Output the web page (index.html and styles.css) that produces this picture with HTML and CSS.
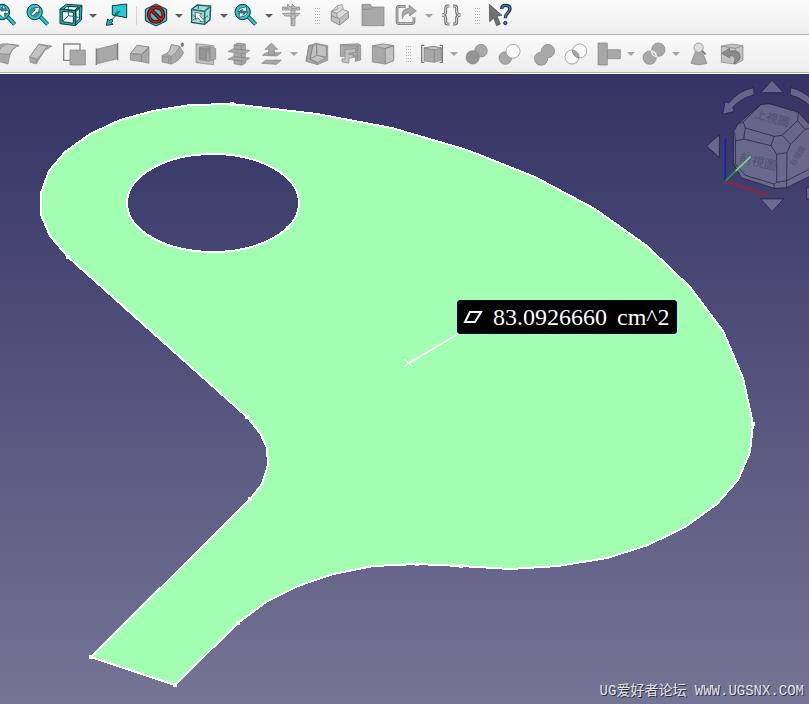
FILE: index.html
```
<!DOCTYPE html>
<html lang="zh-Hans">
<head>
<meta charset="utf-8">
<meta name="viewport" content="width=device-width, initial-scale=1">
<title>Part</title>
<link rel="stylesheet" href="styles.css">
</head>
<body>
<div class="app">
  <div class="toolbar toolbar-view" role="toolbar" aria-label="View">
    <button class="tool teal" aria-label="Fit all"><svg viewBox="-24 9 75 75"><path d="M22 50 44 73" class="rim"/><path d="M22 50 44 73" class="handle"/><circle cx="6" cy="36" r="23"/><circle cx="6" cy="36" r="17" class="lens"/><path d="M-8 36 3 28v5h7v-8H5l5-8 8 8h-4v8h5v-4l8 7-8 7v-4h-5v8h4l-8 7z" class="paper"/></svg></button>
    <button class="tool teal" aria-label="Fit selection"><svg viewBox="75 9 75 75"><path d="M120 50 143 73" class="rim"/><path d="M120 50 143 73" class="handle"/><circle cx="104" cy="36" r="23"/><circle cx="104" cy="36" r="18" class="lens"/><path d="M93 43 106 29 101 25 119 21 115 39 111 35 98 48z" class="paper"/></svg></button>
    <button class="tool teal" aria-label="Isometric"><svg viewBox="174 9 75 75"><path fill-rule="evenodd" d="M180 27 199 13 246 16 244 60 226 77 180 71zM187 34V65L220 70V37zM228 35V67L238 57V25zM191 28 223 31 235 21 201 19z"/><path d="M205 20v27M205 47l-18 18M205 47l31 5" class="thin"/><path d="M180 27 226 32 246 16M226 32v45" class="line"/></svg></button>
    <button class="drop" aria-label="More views"></button>
    <button class="tool teal" aria-label="Go to link"><svg viewBox="309 9 75 75"><path d="M337 17 380 12V53L337 45z" class="bright"/><path d="M360 34 333 62M360 34l-10 3-6 9" class="line"/><path d="M319 76 323 57 328 62 334 57 339 63 334 68 339 73z"/></svg></button>
    <span class="rule"></span>
    <button class="tool teal" aria-label="Draw style"><svg viewBox="432 9 75 75"><path d="M436 28 468 12 500 28V62L468 78 436 62z" class="bright"/><circle cx="468" cy="44" r="22" fill="none" stroke="#400" stroke-width="11"/><path d="M453 29 483 59" stroke="#400" stroke-width="11"/><circle cx="468" cy="44" r="22" fill="none" stroke="#c91818" stroke-width="6"/><path d="M453 29 483 59" stroke="#c91818" stroke-width="6"/></svg></button>
    <button class="drop" aria-label="More draw styles"></button>
    <button class="tool teal" aria-label="Selection view"><svg viewBox="-3 9 75 75"><path d="M5 28 22 15 62 18 60 59 44 73 5 67z" class="pale"/><path d="M7 29 44 34 60 20M44 34v37" class="band"/><path d="M25 18v9M9 47l8 2M30 65l24-18M9 60l12-9" class="thin"/><path d="M15 37 35 41 29 47 42 61 36 67 23 53 17 59z" class="paper"/></svg></button>
    <button class="drop" aria-label="More selection views"></button>
    <button class="tool teal" aria-label="Sync view"><svg viewBox="132 9 75 75"><path d="M174 50 197 73" class="rim"/><path d="M174 50 197 73" class="handle"/><circle cx="158" cy="36" r="23"/><circle cx="158" cy="36" r="17" class="lens"/><path d="M144 34q5-13 20-11l5-5v16h-15l5-5q-7-1-9 5zM173 37q-5 13-19 12l-6 5V39h15l-5 5q8 0 9-7z" class="paper"/></svg></button>
    <button class="drop" aria-label="More sync options"></button>
    <button class="tool" aria-label="Measure"><svg viewBox="267 9 75 75"><path d="M303 20H315V77H303z" class="light"/><path d="M277 21H293V12L299 19V21H306V12L315 21H329V30H277zM277 40H329L322 48H315V56H303V48H285z" class="light"/><path d="M304 61h6M304 66h6M304 71h6M283 25h14M303 25h18M303 44h14" class="thin"/></svg></button>
    <span class="grip"></span>
    <button class="tool" aria-label="New part"><svg viewBox="414 9 75 75"><path d="M424 34 443 16 456 14 460 29 475 34V54L449 75 424 62z" class="pale-grey"/><path d="M424 34 441 40V52L449 56 475 36V54L449 75 424 62z" class="light"/><path d="M424 47 449 58V75M441 40 460 26M443 16V27L424 34" class="line"/></svg></button>
    <button class="tool" aria-label="New group"><svg viewBox="513 9 75 75"><path d="M516 77V13H541L546 21H582V77z"/><path d="M516 28H541L546 22" class="line"/></svg></button>
    <button class="tool" aria-label="Export link"><svg viewBox="42 9 75 75"><path d="M77 19H58Q51 19 51 27V64Q51 71 58 71H94Q102 71 102 64V52" fill="none" stroke="#777" stroke-width="8"/><path d="M77 19H58Q51 19 51 27V64Q51 71 58 71H94Q102 71 102 64V52" fill="none" stroke="#c4c4c4" stroke-width="3"/><path d="M67 56Q61 26 87 25V15L109 33 89 48V39Q73 38 67 56z"/></svg></button>
    <button class="drop off" aria-label="More link options"></button>
    <button class="tool" aria-label="Variable set"><svg viewBox="177 9 75 75"><g fill="none" stroke="#747474" stroke-width="9"><path d="M208 18H203Q197 18 197 25V36Q197 44 186 45Q197 46 197 54V65Q197 72 203 72H208M219 18H224Q230 18 230 25V36Q230 44 242 45Q230 46 230 54V65Q230 72 224 72H219"/></g><g fill="none" stroke="#dddddd" stroke-width="3"><path d="M208 18H203Q197 18 197 25V36Q197 44 186 45Q197 46 197 54V65Q197 72 203 72H208M219 18H224Q230 18 230 25V36Q230 44 242 45Q230 46 230 54V65Q230 72 224 72H219"/></g></svg></button>
    <span class="grip"></span>
    <button class="tool" aria-label="What's this?"><svg viewBox="324 9 75 75"><path d="M328 13 366 46 351 48 361 72 350 77 341 54 329 65z" fill="#6f716e" stroke="#444"/><path d="M365 27Q365 16 377 16 390 16 390 27C390 37 376 38 376 55" fill="none" stroke="#1d2f4c" stroke-width="10"/><path d="M366 27Q366 16 377 16 390 16 390 27C390 37 376 38 376 54" fill="none" stroke="#4779b3" stroke-width="4"/><circle cx="376" cy="69" r="5" fill="#4779b3" stroke="#1d2f4c" stroke-width="3"/></svg></button>
  </div>

  <div class="toolbar toolbar-part" role="toolbar" aria-label="Part">
    <button class="tool" aria-label="Fillet"><svg viewBox="-15 123 75 75"><path d="M-12 148Q0 130 12 131L57 136Q40 142 30 163L24 192-12 182z"/><path d="M-12 157Q0 163 29 163 37 142 57 137L20 132Q-2 142-6 159z" class="light"/></svg></button>
    <button class="tool" aria-label="Chamfer"><svg viewBox="84 123 75 75"><path d="M89 171 117 132 156 138 135 151 108 192 90 186z"/><path d="M89 171 116 133 142 139 112 178z" class="light"/><path d="M112 178 108 190" class="line"/></svg></button>
    <button class="tool" aria-label="Make face from wires"><svg viewBox="183 123 75 75"><path d="M191 132H240V181H191z" class="frame"/><path d="M210 150H256V195H210z"/></svg></button>
    <button class="tool" aria-label="Ruled surface"><svg viewBox="282 123 75 75"><path d="M292 147 350 133V177L292 191z"/><path d="M289 145V195M353 129V181" class="post"/></svg></button>
    <button class="tool" aria-label="Loft"><svg viewBox="381 123 75 75"><path d="M391 161 411 136 447 141V190L425 185 391 180z"/><path d="M391 161 411 136 447 141 425 163z" class="light"/><path d="M391 161 425 163V185M425 163 447 145" class="line"/></svg></button>
    <button class="tool" aria-label="Sweep"><svg viewBox="480 123 75 75"><path d="M486 166 500 161Q512 153 514 134L539 139 551 158Q539 184 513 192L486 186z"/><path d="M500 161Q512 153 514 134L539 139Q531 159 513 170z" class="light"/><path d="M487 171H506V188M513 170V192" class="line"/><ellipse cx="547" cy="134" rx="4" ry="6" fill="#777"/></svg></button>
    <button class="tool" aria-label="Section"><svg viewBox="9 123 75 75"><path d="M18 131 71 137V194L18 188z" class="light"/><path d="M28 142 58 139 77 145V177L58 184 28 179z"/><path d="M29 144 49 147V178L29 176zM49 147 60 143V180" class="dark"/></svg></button>
    <button class="tool" aria-label="Cross-sections"><svg viewBox="108 123 75 75"><path d="M132 135 144 129 166 132V190L154 196 132 191z"/><path d="M154 138V195M132 135 154 138 166 132" class="line"/><path d="M114 155 128 147 180 151 165 161zM114 178 128 170 180 174 165 184z"/></svg></button>
    <button class="tool" aria-label="Offset"><svg viewBox="207 123 75 75"><path d="M217 166 228 158H274L260 168zM215 190 228 181 274 180 259 193z"/><path d="M244 129 263 148H253V165H236V148H225z"/></svg></button>
    <button class="drop off" aria-label="More offsets"></button>
    <button class="tool" aria-label="Thickness"><svg viewBox="342 123 75 75"><path d="M357 136 370 133 376 129 413 137V181L382 194 348 184z"/><path d="M368 139 380 133V166L360 177zM380 133 409 139V172L380 166z" class="light"/><path d="M360 177 380 166 409 173 383 187z" class="light"/><path d="M357 136 348 184M357 136 368 139 360 179 382 189V194" class="line"/></svg></button>
    <button class="tool" aria-label="Projection on surface"><svg viewBox="441 123 75 75"><path d="M451 134 505 131 512 136V180L496 184V171L451 169z"/><path d="M465 149 497 146V157L477 159V164L490 163V173L477 174V189L456 186V176L465 177z" class="light"/><path d="M451 134 502 138 512 135M502 138V182" class="line"/></svg></button>
    <button class="tool" aria-label="Color per face"><svg viewBox="540 123 75 75"><path d="M547 138 578 132 611 137V182L586 192 547 186z"/><path d="M547 138 578 132 611 137 586 145zM586 145 611 137V182L586 192z" class="light"/></svg></button>
    <span class="grip"></span>
    <button class="tool" aria-label="Compound"><svg viewBox="117 123 75 75"><path d="M132 144 160 139 184 144V180L163 187 132 183z"/><path d="M132 144 160 139 184 144 163 150z" class="light"/><path d="M163 150V186" class="line"/><path d="M133 136H125V187H133M179 136H187V187H179" fill="none" stroke="#777" stroke-width="4"/></svg></button>
    <button class="drop off" aria-label="More compound tools"></button>
    <button class="tool" aria-label="Boolean"><svg viewBox="252 123 75 75"><circle cx="303" cy="152" r="19"/><circle cx="278" cy="172" r="20" class="dark"/></svg></button>
    <button class="tool" aria-label="Cut"><svg viewBox="351 123 75 75"><circle cx="376" cy="174" r="19"/><circle cx="399" cy="154" r="21" fill="#fbfbfb"/></svg></button>
    <button class="tool" aria-label="Union"><svg viewBox="447 123 75 75"><path d="M481 156A20 20 0 1 1 500 173A20 20 0 1 1 481 156z"/></svg></button>
    <button class="tool" aria-label="Intersection"><svg viewBox="549 123 75 75"><circle cx="576" cy="171" r="21" class="blank"/><circle cx="599" cy="153" r="21" class="blank"/><path d="M578 151A21 21 0 0 1 597 173A21 21 0 0 1 578 151z"/></svg></button>
    <button class="tool" aria-label="Connect"><svg viewBox="78 123 75 75"><path d="M84 129H112V149H151V176H112V195H84z"/><path d="M112 149V176" class="line"/></svg></button>
    <button class="drop off" aria-label="More join tools"></button>
    <button class="tool" aria-label="Boolean fragments"><svg viewBox="213 123 75 75"><circle cx="265" cy="149" r="20"/><circle cx="239" cy="173" r="20"/><path d="M244 153A20 20 0 0 1 260 170A20 20 0 0 1 244 153z" stroke="#eeeeee" stroke-width="4"/></svg></button>
    <button class="drop off" aria-label="More split tools"></button>
    <button class="tool" aria-label="Check geometry"><svg viewBox="348 123 75 75"><path d="M379 147H393L411 190Q387 199 363 190z"/><circle cx="386" cy="143" r="14" class="lens-grey"/><path d="M396 152 407 163" stroke="#777" stroke-width="5"/></svg></button>
    <button class="tool" aria-label="Defeaturing"><svg viewBox="447 123 75 75"><path d="M454 138 486 132 519 137V181L496 192 454 187z" class="light"/><path d="M454 138 496 145 519 137M496 145V192" class="line"/><path d="M455 160 479 145V154Q508 146 511 169 510 185 491 191 503 167 479 166V174z" fill="#8a8a8a" stroke="#666"/></svg></button>
  </div>

  <main class="viewport">
    <svg class="model" aria-label="Measured face">
      <g transform="translate(0 -74)">
        <path class="face" fill-rule="evenodd" d="M232 104 190 105 153 111 120 120 90 134 65 152 49 171 41 193V215L50 236 68 257 247 417 260 433 267 448 268 465 262 484 250 499 91 657 175 685 238 623 266 602 298 586 333 574 373 566 417 564 461 566 510 569 558 566 607 558 648 545 685 527 717 504 738 480 750 452 753 424 743 378 723 331 690 287 647 246 595 209 535 177 467 150 392 128 317 114zM127 203A86 49 0 1 0 299 203A86 49 0 1 0 127 203z"/>
        <path class="vertices" d="M230 104h4M66 257h4M245 417h4M248 499h4M89 657h4M173 685h4M236 623h4M415 564h4M459 566h4M751 424h4M286 228h4"/>
        <path class="leader" d="M409 363 458 334"/>
        <path class="anchor" d="M404 359 413 367M413 359 404 367"/>
      </g>
    </svg>

    <output class="measure">
      <svg class="area-icon" viewBox="0 0 20 14" aria-hidden="true"><path d="M7 2H18L12 12H2z"/></svg>
      <span>83.0926660</span>
      <span>cm^2</span>
    </output>

    <svg class="navcube" viewBox="0 6 342 429" aria-label="Navigation cube">
      <g class="nav-part">
        <path d="M231 25 266 62H197z"/>
        <path d="M231 419 266 381H197z"/>
        <path d="M35 223 73 188V256z"/>
        <path d="M176 47Q133 54 101 93L90 88 83 127 119 118 113 106Q140 76 177 69z"/>
        <path d="M287 47Q322 54 350 82V107Q322 77 285 69z"/>
        <path d="M335 347H350V381H335z"/>
        <path d="M197 98 223 95 310 121 350 165V310L275 347 237 349 139 317 115 273V180L129 155z"/>
        <path d="M197 98 145 150 151 168 238 193 261 190 308 146 310 121M129 155 145 150M151 168 146 201 121 207 119 181M146 201 228 221 238 193M228 221 245 247 276 242 287 217 261 190M287 217 330 172 308 146M245 247V331L275 326 276 242M121 207V276L151 310 237 336 245 331M237 336V349M275 326V347M275 326 350 288M330 172 350 168"/>
      </g>
      <g class="nav-text">
        <text x="178" y="136" font-size="35" transform="rotate(16 178 136)">上視圖</text>
        <text x="130" y="270" font-size="38" transform="rotate(13 130 270)">前視圖</text>
        <text x="297" y="284" font-size="22" transform="rotate(-58 297 284)">右視圖</text>
      </g>
      <path d="M91 325V200" stroke="#1c1cb4" stroke-width="5"/>
      <path d="M91 327 167 254" stroke="#20a040" stroke-width="5"/>
      <path d="M122 297 167 254" stroke="#82d496" stroke-width="5"/>
      <path d="M91 328 220 371" stroke="#a81c30" stroke-width="5"/>
    </svg>

    <p class="credit">UG爱好者论坛 WWW.UGSNX.COM</p>
  </main>
</div>
</body>
</html>
```
FILE: styles.css
```
* {
  box-sizing: border-box;
}

body {
  margin: 0;
  font-family: "Liberation Serif", "Noto Sans CJK SC", serif;
}

.app {
  display: flex;
  flex-direction: column;
  height: 100vh;
  overflow: hidden;
}

/* Toolbars */
.toolbar {
  display: flex;
  flex: none;
  overflow: hidden;
  border-bottom: 1px solid #b2b2b2;
  background: linear-gradient(#fafafa, #eeeeee);
}

.toolbar-view {
  padding: 3px 0 6px;
}

.toolbar-view > :first-child {
  margin-left: -12px;
}

.toolbar-part {
  padding: 6px 0;
}

.toolbar-part > :first-child {
  margin-left: -9px;
}

.tool,
.drop {
  flex: none;
  display: flex;
  align-items: center;
  justify-content: center;
  padding: 0;
  border: 0;
  background: none;
}

.tool {
  width: 33px;
  height: 25px;
}

.tool svg {
  width: 25px;
  height: 25px;
  fill: #a8a8a8;
  stroke: #808080;
  stroke-width: 2;
}

.drop {
  width: 12px;
  height: 25px;
}

.drop::before {
  content: "";
  border: 4px solid transparent;
  border-top: 4px solid #606060;
  border-bottom: 0;
}

.drop.off::before {
  border-top-color: #a4a4a4;
}

.rule {
  flex: none;
  width: 1px;
  margin: 3px 3px 3px 4px;
  background: #d2d2d2;
}

.grip {
  flex: none;
  width: 5px;
  margin: 5px 4px 3px 7px;
  background: conic-gradient(from 270deg at 1px 1px, #b4b4b4 90deg, transparent 0) 0 0 / 2px 3px;
}

.tool .line,
.tool .thin {
  fill: none;
}

.tool .light {
  fill: #c2c2c2;
}

.tool .pale-grey {
  fill: #dadada;
}

.tool .dark {
  fill: #959595;
}

.tool .blank {
  fill: #ffffff;
  fill-opacity: 0.5;
}

.tool .lens-grey {
  fill: #dedede;
}

.tool .frame {
  fill: #f6f6f6;
  stroke: #868686;
  stroke-width: 4;
}

.tool .post {
  stroke-width: 4;
}

.teal svg {
  fill: #20b4ba;
  stroke: #0b3c42;
  stroke-width: 3;
}

.teal .rim {
  stroke-width: 12;
}

.teal .handle {
  stroke: #24c9ce;
  stroke-width: 7;
}

.teal .lens {
  fill: #35969b;
  stroke: #28d7db;
  stroke-width: 4;
}

.teal .paper {
  fill: #ffffff;
  stroke-width: 2;
}

.teal .bright {
  fill: #24cbd1;
}

.teal .pale {
  fill: #a9dad7;
  stroke: #15575a;
  stroke-width: 4;
}

.teal .band {
  fill: none;
  stroke: #267b7c;
  stroke-width: 5;
}

.teal .thin {
  stroke: #127780;
}

/* 3D view */
.viewport {
  position: relative;
  flex: 1;
  min-height: 0;
  overflow: hidden;
  border-top: 1px solid #ffffff;
  background: linear-gradient(#333365, #757494);
}

.model {
  position: absolute;
  inset: 0;
  width: 100%;
  height: 100%;
  shape-rendering: crispEdges;
}

.face {
  fill: #a2ffb2;
  stroke: #ffffff;
  stroke-width: 2;
}

.vertices {
  stroke: #ffffff;
  stroke-width: 4;
}

.leader {
  stroke: #ffffff;
  stroke-width: 2;
  shape-rendering: auto;
}

.anchor {
  stroke: #ffffff;
  stroke-width: 1;
  shape-rendering: auto;
}

.measure {
  position: absolute;
  left: 457px;
  top: 226px;
  display: flex;
  align-items: center;
  gap: 10px;
  padding: 0 6px 0 5px;
  border: 1px solid #000050;
  border-radius: 3px;
  background: #000000;
  color: #ffffff;
  font-size: 24px;
  line-height: 32px;
  white-space: nowrap;
}

.area-icon {
  width: 20px;
  height: 14px;
  fill: none;
  stroke: #ffffff;
  stroke-width: 2;
}

.navcube {
  position: absolute;
  top: 0;
  right: 0;
  width: 114px;
  height: 143px;
}

.nav-part {
  fill: #a0a0b8;
  fill-opacity: 0.45;
  stroke: #181832;
  stroke-width: 2;
}

.nav-part path:last-child {
  fill: none;
}

.nav-text {
  fill: #50506f;
  font-family: "Noto Sans CJK TC", sans-serif;
  font-weight: 400;
}

.credit {
  position: absolute;
  right: 5px;
  bottom: 3px;
  margin: 0;
  color: #e4e4e4;
  font-family: "Liberation Mono", "Noto Sans CJK SC", monospace;
  font-size: 14px;
  line-height: 20px;
  text-shadow: 1px 1px 0 #303048;
  white-space: nowrap;
}
```
